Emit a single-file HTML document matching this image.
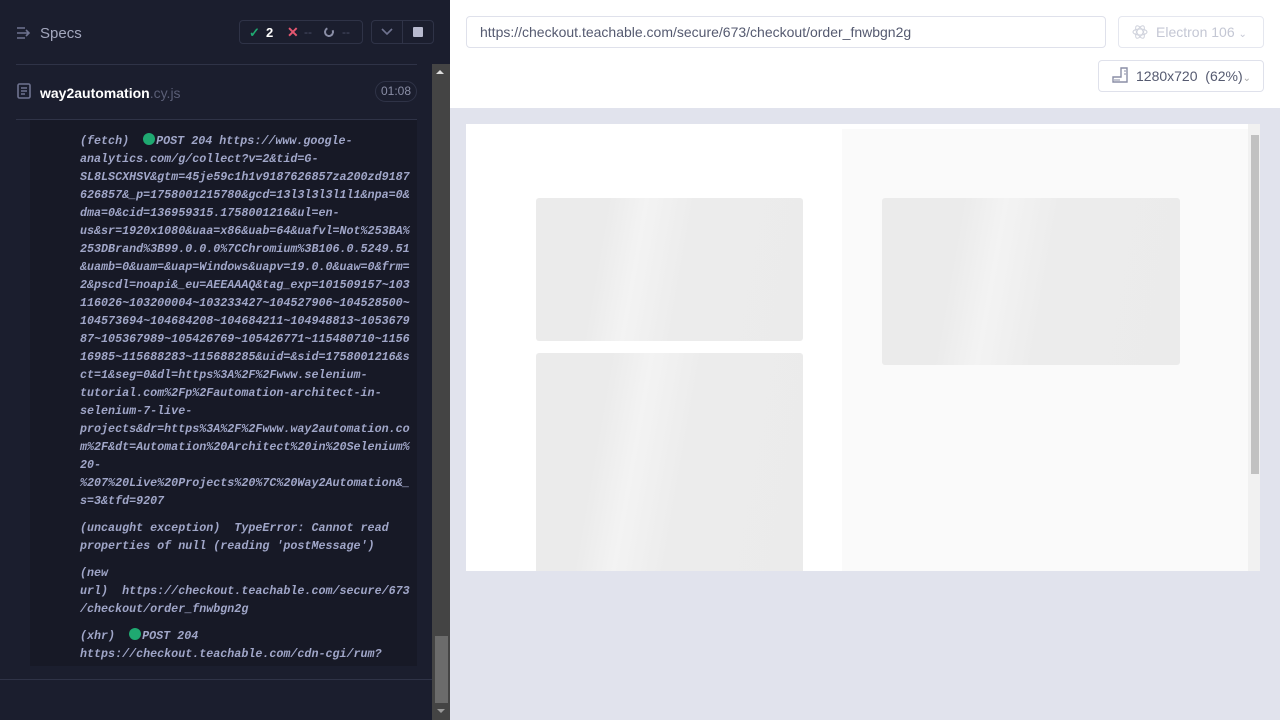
<!DOCTYPE html>
<html><head><meta charset="utf-8"><style>
*{margin:0;padding:0;box-sizing:border-box}
body{width:1280px;height:720px;overflow:hidden;position:relative;font-family:"Liberation Sans",sans-serif;background:#fff}
.l{position:absolute;left:0;top:0;width:450px;height:720px;background:#1b1e2e}
.abs{position:absolute}
.log{position:absolute;left:30px;top:120px;width:387px;height:546px;background:#171926}
.tx{position:absolute;left:80px;font-family:"Liberation Mono",monospace;font-style:italic;font-size:11.7px;line-height:18px;color:#a0a6c8;white-space:pre;font-weight:bold}
.dot{display:inline-block;width:12px;height:12px;border-radius:50%;background:#1fa971;vertical-align:-1px;margin-right:1px}
.ph{position:absolute;border-radius:3px;background:linear-gradient(100deg,#ebebeb 0%,#ebebeb 25%,#f3f3f3 38%,#ececec 55%,#ebebeb 100%)}
</style></head><body>
<div class="l">
  <svg class="abs" style="left:16px;top:26px" width="16" height="14" viewBox="0 0 16 14"><g stroke="#6f7390" stroke-width="1.6" fill="none"><path d="M1 2h8M1 7h12M1 12h8M10 4l3 3-3 3"/></g></svg>
  <div class="abs" style="left:40px;top:25px;font-size:15px;color:#a3a7bd">Specs</div>
  <div class="abs" style="left:239px;top:20px;width:124px;height:24px;border:1px solid #2f3347;border-radius:4px"></div>
  <div class="abs" style="left:249px;top:25px;font-size:13px;color:#1fa971;font-weight:bold">✓</div>
  <div class="abs" style="left:266px;top:25px;font-size:13px;color:#fff;font-weight:bold">2</div>
  <div class="abs" style="left:287px;top:24px;font-size:14px;color:#e45770;font-weight:bold">✕</div>
  <div class="abs" style="left:304px;top:25px;font-size:12px;color:#4a4e66">--</div>
  <div class="abs" style="left:324px;top:27px;width:10px;height:10px;border:2px solid #8a8ea6;border-top-color:transparent;border-radius:50%;transform:rotate(20deg)"></div>
  <div class="abs" style="left:342px;top:25px;font-size:12px;color:#4a4e66">--</div>
  <div class="abs" style="left:371px;top:20px;width:63px;height:24px;border:1px solid #2f3347;border-radius:4px"></div>
  <div class="abs" style="left:402px;top:21px;width:1px;height:22px;background:#2f3347"></div>
  <svg class="abs" style="left:381px;top:28px" width="12" height="8"><path d="M1 1l5 5 5-5" stroke="#6f7390" stroke-width="1.6" fill="none"/></svg>
  <div class="abs" style="left:413px;top:27px;width:10px;height:10px;background:#b8bacf;border-radius:1px"></div>
  <div class="abs" style="left:16px;top:64px;width:401px;height:1px;background:#2f3347"></div>
  <svg class="abs" style="left:17px;top:83px" width="15" height="17"><rect x="1" y="1" width="12" height="14" rx="1.5" stroke="#6f7390" stroke-width="1.6" fill="none"/><path d="M4 5h6M4 8h6M4 11h4" stroke="#6f7390" stroke-width="1.4"/></svg>
  <div class="abs" style="left:40px;top:85px;font-size:14px;color:#fff;font-weight:bold">way2automation<span style="color:#5a5e76;font-weight:normal">.cy.js</span></div>
  <div class="abs" style="left:375px;top:81px;width:42px;height:21px;border:1px solid #2f3347;border-radius:11px;font-size:12px;color:#8a8ea6;text-align:center;line-height:19px">01:08</div>
  <div class="abs" style="left:16px;top:119px;width:401px;height:1px;background:#2f3347"></div>
  <div class="log"></div>
  <div class="tx" style="top:132px">(fetch)  <span class="dot"></span>POST 204 https://www.google-
analytics.com/g/collect?v=2&amp;tid=G-
SL8LSCXHSV&amp;gtm=45je59c1h1v9187626857za200zd9187
626857&amp;_p=1758001215780&amp;gcd=13l3l3l3l1l1&amp;npa=0&amp;
dma=0&amp;cid=136959315.1758001216&amp;ul=en-
us&amp;sr=1920x1080&amp;uaa=x86&amp;uab=64&amp;uafvl=Not%253BA%
253DBrand%3B99.0.0.0%7CChromium%3B106.0.5249.51
&amp;uamb=0&amp;uam=&amp;uap=Windows&amp;uapv=19.0.0&amp;uaw=0&amp;frm=
2&amp;pscdl=noapi&amp;_eu=AEEAAAQ&amp;tag_exp=101509157~103
116026~103200004~103233427~104527906~104528500~
104573694~104684208~104684211~104948813~1053679
87~105367989~105426769~105426771~115480710~1156
16985~115688283~115688285&amp;uid=&amp;sid=1758001216&amp;s
ct=1&amp;seg=0&amp;dl=https%3A%2F%2Fwww.selenium-
tutorial.com%2Fp%2Fautomation-architect-in-
selenium-7-live-
projects&amp;dr=https%3A%2F%2Fwww.way2automation.co
m%2F&amp;dt=Automation%20Architect%20in%20Selenium%
20-
%207%20Live%20Projects%20%7C%20Way2Automation&amp;_
s=3&amp;tfd=9207</div>
  <div class="tx" style="top:519px">(uncaught exception)  TypeError: Cannot read
properties of null (reading 'postMessage')</div>
  <div class="tx" style="top:564px">(new
url)  https://checkout.teachable.com/secure/673
/checkout/order_fnwbgn2g</div>
  <div class="tx" style="top:627px">(xhr)  <span class="dot"></span>POST 204
https://checkout.teachable.com/cdn-cgi/rum?</div>
  <div class="abs" style="left:0;top:679px;width:432px;height:1px;background:#2f3347"></div>
  <div class="abs" style="left:432px;top:64px;width:18px;height:656px;background:#444"></div>
  <div class="abs" style="left:436px;top:70px;width:0;height:0;border:4px solid transparent;border-bottom:4px solid #ddd;border-top:0"></div>
  <div class="abs" style="left:435px;top:636px;width:13px;height:67px;background:#6b6b6b"></div>
  <div class="abs" style="left:437px;top:709px;width:0;height:0;border:4px solid transparent;border-top:4px solid #999;border-bottom:0"></div>
</div>
<div class="abs" style="left:450px;top:0;width:830px;height:108px;background:#fff"></div>
<div class="abs" style="left:466px;top:16px;width:640px;height:32px;border:1px solid #dfe1eb;border-radius:4px;font-size:14px;color:#555a70;padding-left:13px;line-height:30px">https://checkout.teachable.com/secure/673/checkout/order_fnwbgn2g</div>
<div class="abs" style="left:1118px;top:16px;width:146px;height:32px;border:1px solid #e5e7ef;border-radius:4px;font-size:14px;color:#c4c7d4;line-height:30px;padding-left:37px">Electron 106 <span style="font-size:10px">⌄</span></div>
<svg class="abs" style="left:1132px;top:24px" width="16" height="16"><g stroke="#cfd2dc" fill="none" stroke-width="1"><ellipse cx="8" cy="8" rx="7" ry="3"/><ellipse cx="8" cy="8" rx="7" ry="3" transform="rotate(60 8 8)"/><ellipse cx="8" cy="8" rx="7" ry="3" transform="rotate(-60 8 8)"/></g></svg>
<div class="abs" style="left:1098px;top:60px;width:166px;height:32px;border:1px solid #dfe1eb;border-radius:4px;font-size:14px;color:#555a70;line-height:30px;padding-left:37px">1280x720 &nbsp;(62%)<span style="font-size:10px;color:#aaa">⌄</span></div>
<svg class="abs" style="left:1112px;top:67px" width="16" height="16"><path d="M1 15V10h8V1h6v14z" stroke="#8a8ea6" stroke-width="1.4" fill="none"/><path d="M3 12v2M5 12v2M7 12v2M12 4h2M12 7h2" stroke="#8a8ea6"/></svg>
<div class="abs" style="left:450px;top:108px;width:830px;height:612px;background:#e1e3ed"></div>
<div class="abs" style="left:466px;top:124px;width:794px;height:447px;background:#fff"></div>
<div class="abs" style="left:842px;top:129px;width:406px;height:442px;background:#fafafa"></div>
<div class="ph" style="left:536px;top:198px;width:267px;height:143px"></div>
<div class="ph" style="left:536px;top:353px;width:267px;height:218px;border-radius:3px 3px 0 0"></div>
<div class="ph" style="left:882px;top:198px;width:298px;height:167px"></div>
<div class="abs" style="left:1248px;top:124px;width:12px;height:447px;background:#f1f1f1"></div>
<div class="abs" style="left:1251px;top:135px;width:8px;height:339px;background:#c1c1c1"></div>
</body></html>
